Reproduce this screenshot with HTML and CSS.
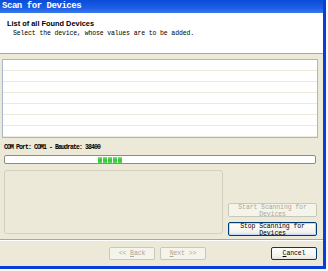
FILE: index.html
```html
<!DOCTYPE html>
<html lang="en">
<head>
    <meta charset="UTF-8">
    <title>Scan for Devices</title>
    <link rel="stylesheet" href="styles.css">
</head>
<body>
    <div class="window">
        <div class="titlebar">Scan for Devices</div>

        <div class="header">
            <div class="header-title">List of all Found Devices</div>
            <div class="header-sub">Select the device, whose values are to be added.</div>
        </div>

        <div class="content">
            <div class="listbox">
                <div class="row"></div>
                <div class="row"></div>
                <div class="row"></div>
                <div class="row"></div>
                <div class="row"></div>
                <div class="row"></div>
                <div class="row"></div>
            </div>

            <div class="status">COM Port: COM1 - Baudrate: 38400</div>
            <div class="progress">
                <div class="marquee">
                    <span></span><span></span><span></span><span></span><span></span>
                </div>
            </div>

            <div class="lower">
                <div class="groupbox"></div>
                <div class="scan-buttons">
                    <button class="btn wide" disabled>Start Scanning for Devices</button>
                    <button class="btn wide focus">Stop Scanning for Devices</button>
                </div>
            </div>
        </div>

        <div class="footer">
            <button class="btn small" disabled>&lt;&lt; <u>B</u>ack</button>
            <button class="btn small" disabled><u>N</u>ext &gt;&gt;</button>
            <button class="btn small cancel"><u>C</u>ancel</button>
        </div>
    </div>
</body>
</html>
```

FILE: styles.css
```css
body {
    margin: 0;
    padding: 0;
    background-color: #fbfbfb;
    font-family: "Liberation Mono", monospace;
}
.window {
    width: 323px;
    height: 266px;
    border-right: 3px solid #0a3ed6;
    border-bottom: 3px solid #0a3ed6;
    background-color: #ece9d8;
    display: flex;
    flex-direction: column;
}
.titlebar {
    height: 13px;
    padding-left: 2px;
    background: linear-gradient(#0a4cd8, #1d5de4 60%, #3a78ee);
    color: #fff;
    font-family: "Liberation Mono", monospace;
    font-weight: bold;
    font-size: 9px;
    letter-spacing: -0.45px;
    line-height: 13px;
}
.header {
    background-color: #fff;
    border-bottom: 1px solid #aca899;
    box-sizing: border-box;
    height: 41px;
}
.header-title {
    font-family: "Liberation Sans", Arial, sans-serif;
    font-weight: bold;
    font-size: 7.4px;
    padding: 6px 0 0 7px;
    line-height: 9px;
}
.header-sub {
    font-size: 6.5px;
    letter-spacing: -0.13px;
    padding: 2px 0 0 13px;
    line-height: 8px;
}
.content {
    padding: 5px 0 0 2px;
    flex: 1;
}
.listbox {
    width: 316px;
    height: 79px;
    box-sizing: border-box;
    border: 1px solid #a5b8cc;
    background-color: #fff;
}
.row {
    height: 11px;
    box-sizing: border-box;
    border-bottom: 1px solid #eceae0;
}
.status {
    margin: 6px 0 0 2px;
    font-size: 6.5px;
    letter-spacing: -0.9px;
    line-height: 8px;
    color: #000;
    font-weight: bold;
}
.progress {
    margin: 3px 0 0 2px;
    width: 312px;
    height: 9px;
    box-sizing: border-box;
    border: 1px solid #8c8c84;
    border-radius: 2px;
    background-color: #fff;
    padding: 1px 0 0 93px;
}
.marquee {
    display: flex;
    gap: 1px;
}
.marquee span {
    width: 4px;
    height: 6px;
    background: linear-gradient(#7ee07e, #2fc82f 50%, #58d858);
}
.lower {
    display: flex;
    margin: 6px 0 0 2px;
}
.groupbox {
    width: 219px;
    height: 64px;
    box-sizing: border-box;
    border: 1px solid #d3d0bf;
    border-radius: 3px;
}
.scan-buttons {
    display: flex;
    flex-direction: column;
    gap: 5px;
    margin: 33px 0 0 5px;
}
.btn {
    font-family: "Liberation Mono", monospace;
    font-size: 6.5px;
    letter-spacing: -0.1px;
    color: #000;
    background: linear-gradient(#fff, #f4f3ee 70%, #e6e4dc);
    border: 1px solid #003c74;
    border-radius: 2px;
    padding: 0;
    box-sizing: border-box;
    overflow: hidden;
}
.btn:disabled {
    color: #aca899;
    border-color: #c9c7ba;
    background: #f5f4ea;
}
.btn.wide {
    width: 89px;
    height: 14px;
    line-height: 6.5px;
    padding-top: 1px;
    vertical-align: top;
}
.btn.focus {
    box-shadow: inset 0 0 0 1px #c3d3fd;
}
.footer {
    border-top: 1px solid #aca899;
    box-shadow: inset 0 1px 0 #fff;
    height: 27px;
    box-sizing: border-box;
    display: flex;
    padding: 7px 0 0 109px;
}
.btn.small {
    width: 46px;
    height: 13px;
    line-height: 11px;
    margin-right: 5px;
}
.btn.cancel {
    margin-left: 60px;
}
```
